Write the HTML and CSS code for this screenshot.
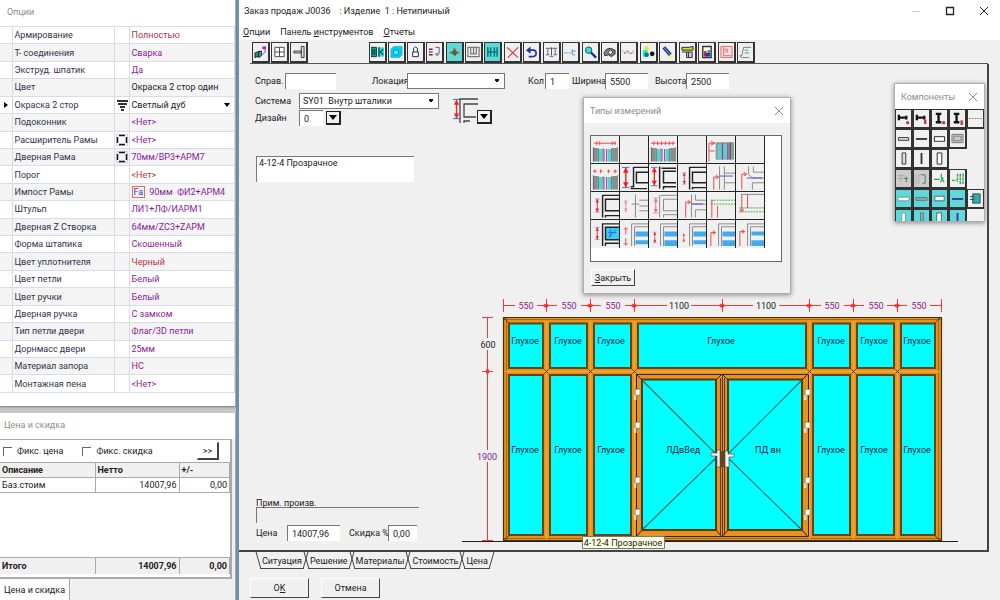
FILE: index.html
```html
<!DOCTYPE html>
<html lang="ru">
<head>
<meta charset="utf-8">
<title>Заказ продаж J0036</title>
<link rel="stylesheet" href="styles.css">
</head>
<body>
<svg class="defs" aria-hidden="true">
  <symbol id="frame" viewBox="0 0 12 12"><path d="M.5.500h11v11H.5z" fill="none" stroke="#ccccff"/><path d="M3 1.500h6M3 10.500h6M1.500 3v6M10.500 3v6" stroke="#111" stroke-width="1.500" fill="none"/></symbol>
  <symbol id="close" viewBox="0 0 10 10"><path d="M1 1l8 8M9 1L1 9" stroke="#8c8c8c" fill="none"/></symbol>
  <symbol id="bars" viewBox="0 0 29 27"><path d="M2 12h5v14H2zM22 12h5v14h-5z" fill="#8c8c8c"/><path d="M7 13h5v13H7zM17 13h5v13h-5z" fill="#5ad0d0"/><path d="M13.500 13v13M16 13v13" stroke="#a3a"/><path d="M2.500 11v15M7.500 12v14M12.500 12v14M21.500 12v14M27.500 11v15" stroke="#555" stroke-width=".7"/></symbol>
  <symbol id="dimv" viewBox="0 0 8 24"><path d="M4 2v20" stroke="#e22" stroke-width="1.500"/><path d="M1 7l3-6 3 6zM1 17l3 6 3-6z" fill="#e22"/><path d="M0 1h8M0 23h8" stroke="#44c"/></symbol>
  <symbol id="hinge" viewBox="0 0 5 10"><path d="M1 1h4v5H1z" fill="#fff" stroke="#666" stroke-width=".5"/><path d="M1 6v4" stroke="#ddd" stroke-width="2"/></symbol>
</svg>
<div class="desktop">
  <aside class="side">
    <section class="panel options">
      <h2 class="panel-title">Опции</h2>
      <table class="opts">
        <colgroup><col class="c-mark"><col class="c-name"><col class="c-ico"><col></colgroup>
        <tr><td></td><th>Армирование</th><td></td><td class="red">Полностью</td></tr>
        <tr><td></td><th>Т- соединения</th><td></td><td>Сварка</td></tr>
        <tr><td></td><th>Экструд. шпатик</th><td></td><td>Да</td></tr>
        <tr><td></td><th>Цвет</th><td></td><td class="blk">Окраска 2 стор один</td></tr>
        <tr class="current"><td class="mark"><svg width="4" height="6"><path d="M0 0l4 3-4 3z"/></svg></td><th>Окраска 2 стор</th><td class="ico"><svg width="12" height="12"><path d="M1 2h11M2 5h9M4 8h5M5 11h3" stroke="#333" stroke-width="1.800"/></svg></td><td class="blk"><span class="pick">Светлый дуб<svg width="6" height="4"><path d="M0 0h6l-3 4z"/></svg></span></td></tr>
        <tr><td></td><th>Подоконник</th><td></td><td>&lt;Нет&gt;</td></tr>
        <tr><td></td><th>Расширитель Рамы</th><td class="ico"><svg width="12" height="12"><use href="#frame"/></svg></td><td>&lt;Нет&gt;</td></tr>
        <tr><td></td><th>Дверная Рама</th><td class="ico"><svg width="12" height="12"><use href="#frame"/></svg></td><td>70мм/ВР3+АРМ7</td></tr>
        <tr><td></td><th>Порог</th><td></td><td class="red">&lt;Нет&gt;</td></tr>
        <tr><td></td><th>Импост Рамы</th><td></td><td><span class="fa">Fa</span>90мм&nbsp; ФИ2+АРМ4</td></tr>
        <tr><td></td><th>Штульп</th><td></td><td>ЛИ1+ЛФ/ИАРМ1</td></tr>
        <tr><td></td><th>Дверная Z Створка</th><td></td><td>64мм/ZС3+ZАРМ</td></tr>
        <tr><td></td><th>Форма штапика</th><td></td><td>Скошенный</td></tr>
        <tr><td></td><th>Цвет уплотнителя</th><td></td><td class="red">Черный</td></tr>
        <tr><td></td><th>Цвет петли</th><td></td><td>Белый</td></tr>
        <tr><td></td><th>Цвет ручки</th><td></td><td>Белый</td></tr>
        <tr><td></td><th>Дверная ручка</th><td></td><td>С замком</td></tr>
        <tr><td></td><th>Тип петли двери</th><td></td><td>Флаг/3D петли</td></tr>
        <tr><td></td><th>Дорнмасс двери</th><td></td><td>25мм</td></tr>
        <tr><td></td><th>Материал запора</th><td></td><td>НС</td></tr>
        <tr><td></td><th>Монтажная пена</th><td></td><td>&lt;Нет&gt;</td></tr>
      </table>
    </section>
    <section class="panel price">
      <h2 class="panel-title">Цена и скидка</h2>
      <div class="price-body">
        <div class="checks">
          <label><input type="checkbox">Фикс. цена</label>
          <label><input type="checkbox">Фикс. скидка</label>
          <button class="btn more">&gt;&gt;</button>
        </div>
        <table class="sums">
          <colgroup><col class="c-desc"><col class="c-net"><col></colgroup>
          <thead><tr><th>Описание</th><th>Нетто</th><th>+/-</th></tr></thead>
          <tbody><tr><td>Баз.стоим</td><td class="num">14007,96</td><td class="num">0,00</td></tr></tbody>
        </table>
        <table class="sums total">
          <colgroup><col class="c-desc"><col class="c-net"><col></colgroup>
          <tbody><tr><td>Итого</td><td class="num">14007,96</td><td class="num">0,00</td></tr></tbody>
        </table>
      </div>
      <button class="side-tab">Цена и скидка</button>
    </section>
  </aside>

  <main class="window">
    <header class="titlebar">
      <h1>Заказ продаж J0036 &nbsp;&nbsp; : Изделие&nbsp; 1 : Нетипичный</h1>
      <div class="winctl">
        <button aria-label="Свернуть"><svg width="10" height="10"><path d="M1 5.500h8" stroke="#ccc"/></svg></button>
        <button aria-label="Развернуть"><svg width="10" height="10"><path d="M1.500 1.500h7v7h-7z" fill="none" stroke="#222" stroke-width="1.300"/></svg></button>
        <button aria-label="Закрыть окно"><svg width="10" height="10"><path d="M1 1l8 8M9 1L1 9" stroke="#222"/></svg></button>
      </div>
    </header>
    <nav class="menu"><a href="#"><u>О</u>пции</a><a href="#">Панель <u>и</u>нструментов</a><a href="#"><u>О</u>тчеты</a></nav>

    <div class="toolbar">
      <div class="tg first">
        <button aria-label="Профили"><svg viewBox="0 0 14 16"><path d="M1 9l5-2v5l-5 2z" fill="#2a8a7a" stroke="#222"/><path d="M5 8l3-1v5l-3 2z" fill="#3aa" stroke="#222"/><path d="M9 2h4v3H9z" fill="#a2b"/><path d="M12 5v3l-3 3" stroke="#a2b" fill="none"/></svg></button>
        <button aria-label="Окно"><svg viewBox="0 0 14 16"><path d="M2 3h10v10H2zM7 3v10M2 8h10" fill="#fff" stroke="#444"/></svg></button>
        <button aria-label="Импост"><svg viewBox="0 0 14 16"><path d="M10 2h3v12h-3zM2 7h8v2H2z" fill="#ddd" stroke="#333"/></svg></button>
      </div>
      <div class="tg">
        <button aria-label="Створка"><svg viewBox="0 0 14 16"><path d="M0 3h6v10H0z" fill="#1a9a9a" stroke="#033"/><path d="M2 5v6M4 5v6" stroke="#033"/><path d="M8 3h6v10H8z" fill="#2dd"/><path d="M13 5l-3 3 3 3M8.500 3v10" stroke="#055" fill="none" stroke-width="1.500"/></svg></button>
        <button aria-label="Стекло"><svg viewBox="0 0 14 16"><path d="M1 5l3-3h9v9l-3 3H1z" fill="#0ce" stroke="#3bc"/><path d="M4 6h5v5H4z" fill="#5ef" stroke="#09b"/></svg></button>
        <button aria-label="Замок"><svg viewBox="0 0 14 16"><path d="M5 8V4q2-3 4 0v4M4 8h6v5H4z" fill="#fff" stroke="#222"/></svg></button>
        <button aria-label="Список"><svg viewBox="0 0 14 16"><path d="M1 5h4" stroke="#22a" stroke-width="1.500"/><path d="M1 8h4" stroke="#c22" stroke-width="1.500"/><path d="M1 11h4" stroke="#333" stroke-width="1.500"/><path d="M8 3h4v6l-2 3-2-2h3" fill="none" stroke="#648"/></svg></button>
      </div>
      <div class="tg">
        <button class="aq" aria-label="Разрез"><svg viewBox="0 0 14 16"><path d="M1 9l4-2 2-4 2 4 4 2-4 1-1 3-3-3z" fill="#b54a2a"/><path d="M5 7h4v4H5z" fill="#2a7a3a"/></svg></button>
        <button aria-label="Рама"><svg viewBox="0 0 14 16"><path d="M1 3h12v10H1zM4 3v7h6V3M7 3v7" fill="none" stroke="#777" stroke-width="1.300"/></svg></button>
        <button class="aq" aria-label="Соединение"><svg viewBox="0 0 14 16"><path d="M2 3v10M5 3v10M9 3v10M12 3v10M2 8h10" stroke="#08757c" stroke-width="1.600"/></svg></button>
      </div>
      <div class="tg">
        <button aria-label="Удалить"><svg viewBox="0 0 14 16"><path d="M1 3l12 11M13 3L2 14" stroke="#d33" fill="none" stroke-width="1.200"/></svg></button>
        <button aria-label="Отменить"><svg viewBox="0 0 14 16"><path d="M4 6h5q3 0 3 3.500T7 13H4" stroke="#23a" fill="none" stroke-width="1.800"/><path d="M1 6l5-4v8z" fill="#23a"/></svg></button>
      </div>
      <div class="tg">
        <button aria-label="Весы"><svg viewBox="0 0 14 16"><path d="M1 4h12M3 4v7M11 4v7M7 4v8M1 11h4M9 11h4M5 13h4" stroke="#666" fill="none"/><path d="M7 3v8" stroke="#44a"/></svg></button>
        <button aria-label="Линия"><svg viewBox="0 0 14 16"><path d="M0 9h4M5 9h3" stroke="#79b"/><path d="M9 5v6h3M8 7h5" stroke="#69c" fill="none"/></svg></button>
      </div>
      <div class="tg">
        <button aria-label="Масштаб"><svg viewBox="0 0 14 16"><path d="M7 8l6 6" stroke="#22a" stroke-width="2.500"/><circle cx="5" cy="6" r="3.500" fill="#3dd" stroke="#154"/></svg></button>
        <button aria-label="Блок"><svg viewBox="0 0 14 16"><path d="M1 9l3-4 4-1 5 2v4l-4 3-3-2-4 1z" fill="#888" stroke="#222"/><path d="M5 8l3-2 3 2-3 3z" fill="#fff" stroke="#333"/></svg></button>
        <button aria-label="Волна"><svg viewBox="0 0 14 16"><path d="M0 6l3 3 3-3 3 4 4-4M2 10l4-2 3 2 4-2" stroke="#a6a" fill="none" stroke-dasharray="2 1"/></svg></button>
      </div>
      <div class="tg">
        <button aria-label="Цвета"><svg viewBox="0 0 14 16"><circle cx="5" cy="4" r="2.500" fill="#fd2"/><path d="M1 6h5v7H1z" fill="#0ee"/><circle cx="5" cy="11" r="2.500" fill="#176"/><circle cx="11" cy="10" r="2.500" fill="#111"/></svg></button>
        <button aria-label="Кисть"><svg viewBox="0 0 14 16"><path d="M9 8l5 6h-6z" fill="#fe6"/><path d="M3 3l7 8" stroke="#238" stroke-width="4"/><path d="M3 3l7 8" stroke="#9be"/></svg></button>
      </div>
      <div class="tg">
        <button aria-label="Папка"><svg viewBox="0 0 14 16"><path d="M1 3h8l4-1v4H1z" fill="#dd2" stroke="#222"/><path d="M6 8h6v6H6z" fill="#ccd" stroke="#222"/><path d="M8 8v6M1 8h5" stroke="#222"/></svg></button>
        <button aria-label="Отчет"><svg viewBox="0 0 14 16"><path d="M3 2h9v12H3z" fill="#fff" stroke="#333" stroke-width="1.500"/><path d="M4 7h3v6H4z" fill="#d22"/><path d="M6 9h5v4H6z" fill="#23c"/><path d="M8 6h3v3H8z" fill="#2a3"/></svg></button>
      </div>
      <div class="tg">
        <button aria-label="Чертеж"><svg viewBox="0 0 14 16"><path d="M1 2h12v12H1zM4 3v9h8M4 5h4v3H5" fill="#fdd" stroke="#d66"/></svg></button>
        <button aria-label="Документ"><svg viewBox="0 0 14 16"><path d="M13 3H5L3 12h-2q0 2 3 2h7" fill="none" stroke="#777"/><path d="M6 6h4M6 9h5" stroke="#3a5"/></svg></button>
      </div>
    </div>

    <div class="work">
      <form class="form">
        <div class="row">
          <label class="lab" for="ref">Справ.</label><input id="ref" class="w-ref">
          <label class="loc" for="loc">Локация</label><select id="loc" class="w-loc"><option></option></select>
          <label class="qty" for="qty">Кол</label><input id="qty" class="w-qty" value="1">
          <label class="wid" for="wd">Ширина</label><input id="wd" class="w-dim" value="5500">
          <label class="hgt" for="ht">Высота</label><input id="ht" class="w-dim" value="2500">
        </div>
        <div class="split">
          <div>
            <div class="row sys"><label class="lab2" for="sys">Система</label><select id="sys" class="w-sys"><option>SY01&nbsp; Внутр шталики</option></select></div>
            <div class="row dsn"><label class="lab2" for="dsn">Дизайн</label><input id="dsn" class="w-qty" value="0"><button type="button" class="drop" aria-label="Выбрать дизайн"><svg width="8" height="5"><path d="M0 0h8l-4 5z"/></svg></button></div>
          </div>
          <div class="profile"><svg width="26" height="26"><use href="#dimv" x="0" y="0" width="7" height="22"/><path d="M25 1H7v24M25 6H11v13h12M11 25v-2h6" fill="none" stroke="#444" stroke-width="1.300"/></svg><button type="button" class="drop" aria-label="Выбрать профиль"><svg width="8" height="5"><path d="M0 0h8l-4 5z"/></svg></button></div>
        </div>
        <textarea class="glass" aria-label="Заполнение">4-12-4 Прозрачное</textarea>
      </form>
      <div class="lower">
        <form class="notes">
          <label for="note">Прим. произв.</label><input id="note" class="note">
          <div class="row"><label class="lab3" for="cost">Цена</label><input id="cost" class="w-cost" value="14007,96"><label class="disc" for="disc">Скидка %</label><input id="disc" class="w-disc" value="0,00"></div>
        </form>
        <svg class="drawing" viewBox="460 295 525 255" preserveAspectRatio="xMinYMax meet" role="img" aria-label="Чертеж изделия">
          <path d="M462 541.500h496" stroke="#222"/>
          <g stroke="#f33" fill="#e33">
            <path d="M503 305.500h12M537 305.500h20M581 305.500h20M625 305.500h42M691 305.500h62M779 305.500h42M844 305.500h20M887 305.500h20M930 305.500h11" fill="none"/>
            <path d="M503.500 299v13M546.500 299v13M590.500 299v13M634.500 299v13M722.500 299v13M809.500 299v13M853.500 299v13M897.500 299v13M941.500 299v13" fill="none"/>
            <path d="M543 305.500l3-1.500 3 1.500-3 2zM587 305.500l3-1.500 3 1.500-3 2zM631 305.500l3-1.500 3 1.500-3 2zM719 305.500l3-1.500 3 1.500-3 2zM806 305.500l3-1.500 3 1.500-3 2zM850 305.500l3-1.500 3 1.500-3 2zM894 305.500l3-1.500 3 1.500-3 2z"/>
            <path d="M487.500 318v20M487.500 350v100M487.500 462v79M482 317.500h11M482 371.500h11M482 540.500h11M486 371.500l1.500-3 1.500 3-1.500 3z"/>
          </g>
          <g class="dim">
            <text class="v" x="526" y="309">550</text><text class="v" x="569" y="309">550</text><text class="v" x="613" y="309">550</text>
            <text x="679" y="309">1100</text><text x="766" y="309">1100</text>
            <text class="v" x="832" y="309">550</text><text class="v" x="876" y="309">550</text><text class="v" x="919" y="309">550</text>
            <text x="488" y="348">600</text><text class="v" x="487" y="460">1900</text>
          </g>
          <path d="M503.500 317.500h438v223h-438z" fill="#e2941f" stroke="#4a2c06" stroke-width="1.200"/>
          <path d="M504 319.500h437M506.500 318v222M938.500 318v222M504 538.500h437" stroke="#8a5510" stroke-width=".7"/>
          <path d="M503 317l7 7M941 317l-7 7M503 541l7-6M941 541l-7-6" stroke="#3a2204" stroke-width=".8"/>
          <g fill="#0ff" stroke="#6b4210" stroke-width="2">
            <path d="M509 323.500h34v44.500h-34zM550 323.500h37v44.500h-37zM594 323.500h37v44.500h-37zM638 323.500h168v44.500H638zM813 323.500h37v44.500h-37zM857 323.500h37v44.500h-37zM901 323.500h34v44.500h-34z"/>
            <path d="M509 375h34v160h-34zM550 375h37v160h-37zM594 375h37v160h-37zM813 375h37v160h-37zM857 375h37v160h-37zM901 375h34v160h-34z"/>
          </g>
          <path d="M546.500 321v218M590.500 321v218M634.500 321v218M809.500 321v218M853.500 321v218M897.500 321v218M505 371.500h434" stroke="#f1a838" stroke-width="1.500"/>
          <g stroke="#3a2204" stroke-width=".8"><path d="M544.500 369.500l4 4m0-4l-4 4M588.500 369.500l4 4m0-4l-4 4M632.500 369.500l4 4m0-4l-4 4M807.500 369.500l4 4m0-4l-4 4M851.500 369.500l4 4m0-4l-4 4M895.500 369.500l4 4m0-4l-4 4"/></g>
          <path d="M636.500 374.500h172v162h-172z" fill="#e2941f" stroke="#3a2204"/>
          <path d="M722.500 374v163M720.500 378v157M724.500 378v157" stroke="#3a2204" stroke-width=".8"/>
          <g fill="#0ff" stroke="#5c380c" stroke-width="2"><path d="M642 379.500h74v150.500h-74zM728 379.500h74v150.500h-74z"/></g>
          <path d="M636 374l6 6M808 374l-6 6M636 537l6-7M808 537l-6-7M722 374l-6 6M722 374l6 6M722 537l-6-7M722 537l6-7" stroke="#3a2204"/>
          <path d="M642 380l76 76-76 74M802 380l-76 76 76 74" fill="none" stroke="#156a6a" stroke-width="1.200"/>
          <g><use href="#hinge" x="634" y="388" width="6" height="12"/><use href="#hinge" x="634" y="421" width="6" height="12"/><use href="#hinge" x="634" y="476" width="6" height="12"/><use href="#hinge" x="634" y="508" width="6" height="12"/><use href="#hinge" x="804" y="388" width="6" height="12"/><use href="#hinge" x="804" y="421" width="6" height="12"/><use href="#hinge" x="804" y="476" width="6" height="12"/><use href="#hinge" x="804" y="508" width="6" height="12"/></g>
          <path d="M711 453h6v-3h3v17h-3v-11h-6zM734 454h-6v-3h-3v16h4v-10h5z" fill="#f4f4f4" stroke="#555" stroke-width=".7"/><path d="M720.500 451h4v16h-4z" fill="#6b4210"/>
          <g class="pane">
            <text x="525" y="344">Глухое</text><text x="568" y="344">Глухое</text><text x="611" y="344">Глухое</text><text x="721" y="344">Глухое</text><text x="831" y="344">Глухое</text><text x="874" y="344">Глухое</text><text x="917" y="344">Глухое</text>
            <text x="525" y="453">Глухое</text><text x="568" y="453">Глухое</text><text x="611" y="453">Глухое</text><text x="683" y="453">ЛДвВед</text><text x="768" y="453">ПД вн</text><text x="831" y="453">Глухое</text><text x="874" y="453">Глухое</text><text x="917" y="453">Глухое</text>
          </g>
          <path d="M582.500 536.500h82v12h-82z" fill="#ffffe1" stroke="#777"/>
          <text class="tip" x="623" y="546">4-12-4 Прозрачное</text>
        </svg>
      </div>
    </div>
    <div class="tabs"><button>Ситуация</button><button class="on">Решение</button><button>Материалы</button><button>Стоимость</button><button>Цена</button></div>
    <div class="actions"><button class="btn">O<u>K</u></button><button class="btn">Отмена</button></div>

    <section class="dialog types">
      <header><h2>Типы измерений</h2><button aria-label="Закрыть типы"><svg width="10" height="10"><use href="#close"/></svg></button></header>
      <div class="well"><div class="tgrid">
        <button aria-label="Тип 1"><svg viewBox="0 0 29 27"><use href="#bars" width="29" height="27"/><path class="r" d="M3 7h23M6 5v4M9 5v4M22 5v4M25 5v4"/></svg></button>
        <button aria-label="Тип 2"></button>
        <button aria-label="Тип 3"><svg viewBox="0 0 29 27"><use href="#bars" width="29" height="27"/><path class="r" d="M2 7h25M5 5v4M9 5v4M13 5v4M17 5v4M21 5v4M25 5v4"/></svg></button>
        <button aria-label="Тип 4"></button>
        <button aria-label="Тип 5"><svg viewBox="0 0 29 27"><path d="M9 6h19v18H9z" fill="#8c9a9a"/><path d="M11 8h4v15h-4zM17 8h4v15h-4z" fill="#5ad0d0"/><path d="M16 7v17M21.500 7v17" stroke="#a3a"/><path d="M24 6v18" stroke="#444"/><path class="r" d="M2 26V7h6M4 5l4 2-4 2M2 15h6"/></svg></button>
        <button aria-label="Тип 6"></button>

        <button aria-label="Тип 7"><svg viewBox="0 0 29 27"><use href="#bars" width="29" height="27"/><path class="r" d="M2 7h4M9 7h3M17 7h3M23 7h4M4 5v4M10 5v4M18 5v4M25 5v4"/></svg></button>
        <button aria-label="Тип 8"><svg viewBox="0 0 29 27"><use href="#dimv" x="2" y="2" width="8" height="23"/><path class="k" d="M29 3H14v20H11M29 8H17v11h12M11 25h17"/></svg></button>
        <button class="sel" aria-label="Тип 9"><svg viewBox="0 0 29 27"><use href="#dimv" x="2" y="2" width="7" height="21"/><path class="k" d="M11 2v23M28 4H13M28 7H15v12h13M15 26v-3h13"/></svg></button>
        <button aria-label="Тип 10"><svg viewBox="0 0 29 27"><use href="#dimv" x="3" y="8" width="7" height="13"/><path class="k" d="M29 3H12v23M29 8H15v11h14M15 26v-2h14"/></svg></button>
        <button aria-label="Тип 11"><svg viewBox="0 0 29 27"><path class="g" d="M13 2v24M18 2v7h11M18 26v-7h11M18 9v10"/><path class="r" d="M7 26V13h5M9 11l3 2-3 2"/><path class="b" d="M13 12h14"/></svg></button>
        <button aria-label="Тип 12"><svg viewBox="0 0 29 27"><path class="g" d="M13 2v8l4 4h12M18 2v6h11M17 26v-7h12"/><path class="r" d="M6 26V10h5M8 8l3 2-3 2"/><path class="b" d="M11 14h16"/></svg></button>

        <button aria-label="Тип 13"><svg viewBox="0 0 29 27"><use href="#dimv" x="3" y="6" width="7" height="15"/><path class="k" d="M29 3H12v23M29 7H15v12h14M15 26v-2h14"/></svg></button>
        <button aria-label="Тип 14"><svg viewBox="0 0 29 27"><use href="#dimv" x="3" y="8" width="6" height="12" opacity=".6"/><path class="g" d="M16 2v24M20 8h9M20 14h9M20 19h9M12 12h8"/></svg></button>
        <button aria-label="Тип 15"><svg viewBox="0 0 29 27"><use href="#dimv" x="4" y="5" width="6" height="17" opacity=".6"/><path class="g" d="M11 3v23M29 3H12M29 7H15v12h14M15 26v-3h14"/></svg></button>
        <button aria-label="Тип 16"><svg viewBox="0 0 29 27"><path class="g" d="M14 2v10h15M18 2v6h11M18 26v-8h11M14 26V12"/><path class="r" d="M8 26V10h5M10 8l3 2-3 2"/><path class="b" d="M14 12h12"/></svg></button>
        <button aria-label="Тип 17"><svg viewBox="0 0 29 27"><path class="gr" d="M4 8h25M4 12h25"/><path class="r" d="M5 26V10M11 26V14M4 10l3-2"/></svg></button>
        <button aria-label="Тип 18"><svg viewBox="0 0 29 27"><path class="gr" d="M3 16h26M3 20h26"/><path class="r" d="M6 2v18M12 2v14M4 17l2 3 2-3"/><path class="g" d="M5 2h24"/></svg></button>

        <button aria-label="Тип 19"><svg viewBox="0 0 29 27"><use href="#dimv" x="3" y="6" width="7" height="14"/><path d="M15 7h14v12H15z" fill="#3cf"/><path class="b" d="M18 17l8-8M20 9v8M18 12h8"/><path class="k" d="M29 3H12v23M29 6.500H15v13h14M15 26v-3h14"/></svg></button>
        <button aria-label="Тип 20"><svg viewBox="0 0 29 27"><path d="M16 11h13v5H16zM16 20h13v4H16z" fill="#4ae"/><path class="g" d="M29 3H12v23M15 6h14M15 6v20"/><path class="r" d="M6 7v7M6 18v7M4 9l2-2 2 2M4 23l2 2 2-2"/></svg></button>
        <button aria-label="Тип 21"><svg viewBox="0 0 29 27"><use href="#dimv" x="3" y="11" width="6" height="12"/><path d="M16 11h13v5H16zM16 20h13v6H16z" fill="#4ae"/><path class="g" d="M29 3H12v23M29 6H15v20"/></svg></button>
        <button aria-label="Тип 22"><svg viewBox="0 0 29 27"><use href="#dimv" x="3" y="13" width="6" height="9"/><path d="M16 11h13v5H16zM16 20h13v4H16z" fill="#4ae"/><path class="g" d="M29 3H12v23M29 6H15v20"/></svg></button>
        <button aria-label="Тип 23"><svg viewBox="0 0 29 27"><path d="M16 11h13v5H16zM16 20h13v6H16z" fill="#4ae"/><path class="g" d="M29 3H12v23M29 6H15v20"/><path class="r" d="M4 26V12h5M6 10l3 2-3 2"/></svg></button>
        <button aria-label="Тип 24"><svg viewBox="0 0 29 27"><path d="M16 11h13v4H16zM16 20h13v6H16z" fill="#4ae"/><path class="g" d="M29 3H12v23M29 6H15v20"/><path class="r" d="M4 26V11h5M6 9l3 2-3 2"/></svg></button>
      </div></div>
      <button class="btn shut"><u>З</u>акрыть</button>
    </section>

    <section class="dialog parts">
      <header><h2>Компоненты</h2><button aria-label="Закрыть компоненты"><svg width="10" height="10"><use href="#close"/></svg></button></header>
      <div class="pgrid">
        <button aria-label="Деталь 1"><svg viewBox="0 0 14 16"><path d="M2 4v6M2 7h8M10 5v4" stroke="#111" stroke-width="2.500"/><circle cx="11.500" cy="12.500" r="1.800" fill="#c33"/></svg></button>
        <button aria-label="Деталь 2"><svg viewBox="0 0 14 16"><path d="M2 4v6M2 7h8M10 5v4" stroke="#111" stroke-width="2.500"/><path d="M11 9v5" stroke="#c33" stroke-width="2.500"/></svg></button>
        <button aria-label="Деталь 3"><svg viewBox="0 0 14 16"><path d="M3 3h6M6 3v9M3 12h6" stroke="#111" stroke-width="2.500"/><circle cx="11.500" cy="12.500" r="1.800" fill="#c33"/></svg></button>
        <button aria-label="Деталь 4"><svg viewBox="0 0 14 16"><path d="M3 3h6M6 3v9M3 12h6" stroke="#111" stroke-width="2.500"/><path d="M11.500 10v5" stroke="#c33" stroke-width="2.500"/></svg></button>
        <button aria-label="Деталь 5"><svg viewBox="0 0 14 16"><path d="M0 8h14" stroke="#c66" stroke-dasharray="2 1"/></svg></button>
        <button aria-label="Деталь 6"><svg viewBox="0 0 14 16"><path d="M1.500 7h11v3h-11z" fill="#ddd" stroke="#333"/></svg></button>
        <button aria-label="Деталь 7"><svg viewBox="0 0 14 16"><path d="M1 8.500h12" stroke="#333" stroke-width="2"/></svg></button>
        <button aria-label="Деталь 8"><svg viewBox="0 0 14 16"><path d="M1.500 6h11v5h-11z" fill="#fff" stroke="#222"/></svg></button>
        <button aria-label="Деталь 9"><svg viewBox="0 0 14 16"><path d="M1 3.500h12v9H1zM3 5.500h8v5H3z" fill="#ccc" stroke="#777"/></svg></button>
        <i></i>
        <button aria-label="Деталь 10"><svg viewBox="0 0 14 16"><path d="M5.500 2h4v12h-4z" fill="#ddd" stroke="#333"/></svg></button>
        <button aria-label="Деталь 11"><svg viewBox="0 0 14 16"><path d="M7 2v12" stroke="#333" stroke-width="2"/></svg></button>
        <button aria-label="Деталь 12"><svg viewBox="0 0 14 16"><path d="M4.500 2h5v12h-5z" fill="#fff" stroke="#222"/></svg></button>
        <i></i><i></i>
        <button class="gy" aria-label="Деталь 13"><svg viewBox="0 0 14 16"><path d="M1 5h8M1 8h7M4 4v8" stroke="#888" stroke-dasharray="1 1"/><path d="M10 6v6M8 8h4" stroke="#384"/></svg></button>
        <button class="gy" aria-label="Деталь 14"><svg viewBox="0 0 14 16"><path d="M1 4v10M4 4v10" stroke="#888" stroke-dasharray="1 1"/><path d="M6 4h5v9H8" stroke="#384" fill="none"/></svg></button>
        <button aria-label="Деталь 15"><svg viewBox="0 0 14 16"><path d="M1 9h6M9 3v4l3 5M11 7l-3 5" stroke="#2a4" fill="none" stroke-width="1.300"/></svg></button>
        <button aria-label="Деталь 16"><svg viewBox="0 0 14 16"><path d="M1 10h5M7 3v9M10 3v11M13 3v11" stroke="#2a4" stroke-width="1.500" stroke-dasharray="3 1"/></svg></button>
        <i></i>
        <button class="aq" aria-label="Деталь 17"><svg viewBox="0 0 14 16"><path d="M1 6.500h12v4H1z" fill="#fff" stroke="#699"/></svg></button>
        <button class="aq" aria-label="Деталь 18"><svg viewBox="0 0 14 16"><path d="M1 7h12v3H1z" fill="#9aa" stroke="#577"/></svg></button>
        <button class="aq" aria-label="Деталь 19"><svg viewBox="0 0 14 16"><path d="M2 5.500h10v5H2z" fill="#fff" stroke="#466"/></svg></button>
        <button class="aq" aria-label="Деталь 20"><svg viewBox="0 0 14 16"><path d="M1 8.500h12" stroke="#438" stroke-width="2"/></svg></button>
        <button aria-label="Деталь 21"><svg viewBox="0 0 14 16"><path d="M4 3h8v10H4z" fill="#3aa" stroke="#255"/><path d="M1 6h5M1 9h5" stroke="#444"/></svg></button>
        <button class="aq" aria-label="Деталь 22"><svg viewBox="0 0 14 16"><path d="M5 2h4v12H5z" fill="#fff" stroke="#699"/></svg></button>
        <button class="aq" aria-label="Деталь 23"><svg viewBox="0 0 14 16"><path d="M6 2h3v12H6z" fill="#9aa" stroke="#577"/></svg></button>
        <button class="aq" aria-label="Деталь 24"><svg viewBox="0 0 14 16"><path d="M4 2h5v12H4z" fill="#fff" stroke="#466"/></svg></button>
        <button class="aq" aria-label="Деталь 25"><svg viewBox="0 0 14 16"><path d="M7 2v12" stroke="#438" stroke-width="2"/></svg></button>
      </div>
    </section>
  </main>
</div>
</body>
</html>
```
FILE: styles.css
```css
* { box-sizing: border-box; }
body, h1, h2 { margin: 0; }
body, button, input, select, textarea {
  font: 9px/12px "Roboto", sans-serif;
  color: #222;
}
button { padding: 0; border: 0; background: none; border-radius: 0; }
form { margin: 0; }
label { white-space: nowrap; }
svg { flex: none; display: block; }
.defs { position: absolute; width: 0; height: 0; }
.desktop { display: flex; min-height: 100vh; background: #f0f0f0; }

/* left column */
.side {
  flex: none; width: 239px; display: flex; flex-direction: column; gap: 7px;
  background: #c6c6c6; border-right: 3px solid #6b94b4;
}
.panel { background: #fff; border-right: 1px solid #aaa; }
.panel-title {
  height: 26px; padding: 0 7px; font-size: 9px; font-weight: normal; line-height: 25px; color: #8c8c8c;
}
.options { padding-bottom: 13px; box-shadow: 0 1px 2px #777; }
.opts { width: 100%; height: 367px; table-layout: fixed; border-collapse: collapse; border-top: 1px solid #999; }
.c-mark { width: 12px; }
.c-name { width: 102px; }
.c-ico { width: 15px; }
.opts td, .opts th {
  padding: 0 2px; text-align: left; font-weight: normal; white-space: nowrap;
  border: 1px solid #d9dce4; border-left: 0; color: #8a1a9a; vertical-align: middle;
}
.opts th { color: #333348; }
.opts tr:nth-child(even) > * { background: #f4f4f5; }
.opts .red { color: #b8333f; }
.opts .blk { color: #222; }
.opts .ico { padding: 0 1px; }
.opts .mark { padding: 0 4px; }
.pick { display: flex; justify-content: space-between; align-items: center; padding-right: 2px; }
.fa { display: inline-block; margin-right: 4px; padding: 0 1px; border: 1px solid #e66; color: #33c; line-height: 10px; }

.price { flex: 1; display: flex; flex-direction: column; background: #f0f0f0; }
.price .panel-title { padding: 0 4px; background: #fff; }
.price-body {
  flex: 1; display: flex; flex-direction: column; margin-right: 3px; background: #fff;
  border: 1px solid #aaa; border-width: 1px 2px 2px 0;
}
.checks { display: flex; align-items: center; gap: 19px; height: 22px; padding: 0 11px 0 3px; }
.checks label { display: flex; align-items: center; gap: 5px; }
.checks input {
  appearance: none; width: 9px; height: 9px; margin: 0; background: #fff;
  border: 1px solid #666; border-width: 1px 0 0 1px;
}
.btn {
  background: #f0f0f0; border: 1px solid #fff; border-right-color: #444; border-bottom-color: #444;
  text-align: center;
}
.more { width: 22px; height: 18px; margin-left: auto; background: #fff; border-right-width: 2px; border-bottom-width: 2px; }
.sums { width: 100%; table-layout: fixed; border-collapse: collapse; }
.c-desc { width: 95px; }
.c-net { width: 84px; }
.sums th, .sums td { height: 15px; padding: 0 2px; text-align: left; border: 1px solid #aaa; border-left: 0; }
.sums th { background: #f0f0f0; font-weight: bold; }
.sums .num { text-align: right; }
.total { margin-top: auto; margin-bottom: 3px; font-weight: bold; }
.total td { background: #f0f0f0; height: 17px; border-bottom: 0; }
.side-tab { align-self: flex-start; width: 70px; height: 21px; background: #fff; border-right: 1px solid #aaa; }

/* order window */
.window { position: relative; flex: 1; min-width: 0; display: flex; flex-direction: column; }
.titlebar { display: flex; justify-content: space-between; height: 22px; padding: 0 11px 0 5px; background: #fff; }
.titlebar h1 { font-size: 9px; font-weight: normal; line-height: 22px; color: #222; }
.winctl { display: flex; align-items: center; gap: 24px; }
.menu { display: flex; gap: 10px; height: 18px; padding: 0 4px; background: #fff; line-height: 20px; }
.menu a { color: #222; text-decoration: none; }
.toolbar { display: flex; gap: 2px; margin: 2px 12px 0 11px; border-bottom: 1px solid #555; }
.tg { display: flex; gap: 1px; }
.tg.first { margin: 0 59px 0 2px; }
.tg button, .pgrid button {
  width: 18px; height: 21px; padding: 1px; background: #f0f0f0;
  border: 1px solid #333; border-right-width: 2px; border-bottom-width: 2px;
}
.tg svg, .pgrid svg, .tgrid svg { width: 100%; height: 100%; }
.tg .aq, .pgrid .aq { background: #5fd8dc; }
.work {
  flex: 1; display: flex; flex-direction: column; margin-right: 11px;
  border: solid #444; border-width: 0 2px 2px 0;
}
.work input, .work textarea {
  height: 16px; margin: 0; padding: 0 4px; background: #fff; border-radius: 0;
  border: 1px solid #777; border-width: 1px 0 0 1px; outline: 0; resize: none;
}
select {
  appearance: none; height: 16px; padding: 0 14px 0 3px; border-radius: 0; border: 1px solid #777;
  background: #fff conic-gradient(from -34deg at 50% 100%, #111 68deg, transparent 0) no-repeat right 4px center / 6px 4px;
}
.form { padding: 9px 0 0 16px; }
.row { display: flex; align-items: center; gap: 3px; }
.lab { width: 27px; }
.lab2 { width: 41px; }
.w-ref { width: 51px; }
.loc { width: 32px; margin-left: 33px; }
.w-loc { width: 98px; }
.qty { width: 14px; margin-left: 20px; }
.w-qty { width: 24px; }
.wid { width: 30px; }
.w-dim { width: 43px; }
.hgt { width: 28px; margin-left: 4px; }
.split { display: flex; gap: 14px; margin-top: 4px; }
.w-sys { width: 140px; }
.dsn { margin-top: 1px; }
.drop {
  display: grid; place-items: center; width: 15px; height: 14px; background: #f0f0f0;
  border: 1px solid #222; border-right-width: 2px; border-bottom-width: 2px;
}
.profile { display: flex; align-items: flex-end; padding-top: 3px; height: 31px; }
.profile .drop { margin-left: -2px; }
.work .glass { display: block; width: 158px; height: 26px; margin: 30px 0 0 1px; padding: 0 2px; line-height: 13px; }
.lower { flex: 1; display: flex; align-items: flex-end; }
.notes { flex: none; width: 221px; padding: 0 41px 9px 17px; }
.notes > label { display: block; height: 10px; }
.work .note { display: block; width: 100%; margin-bottom: 2px; background: #f0f0f0; }
.lab3 { width: 28px; }
.w-cost { width: 53px; }
.disc { width: 36px; margin-left: 6px; }
.w-disc { width: 29px; }
.drawing { flex: 1; min-width: 0; height: 255px; }
.drawing text { font-size: 9px; text-anchor: middle; fill: #222; }
.drawing .v { fill: #8a1a8a; }
.drawing .pane text { fill: #024; }

.tabs { display: flex; padding-left: 19px; height: 17px; }
.tabs button { position: relative; height: 17px; padding: 0 4px; }
.tabs button::before, .tabs button::after {
  content: ""; position: absolute; top: 0; bottom: 0; border: 1px solid #444; border-top: 0;
}
.tabs button::before { left: 0; right: 50%; border-right: 0; transform: skewX(16deg); }
.tabs button::after { left: 50%; right: 0; border-left: 0; transform: skewX(-16deg); }
.actions { display: flex; gap: 12px; padding: 9px 11px 2px; }
.actions .btn { width: 59px; height: 20px; }

/* floating windows */
.dialog { position: absolute; background: #f0f0f0; border: 1px solid #b0b0b0; box-shadow: 0 1px 5px #888; }
.dialog header { display: flex; justify-content: space-between; align-items: center; height: 25px; padding: 0 6px; background: #fff; }
.dialog h2 { font-size: 9px; font-weight: normal; line-height: 24px; color: #8c8c8c; }
.types { left: 344px; top: 97px; width: 208px; padding-bottom: 7px; }
.well { margin: 12px 8px 7px 6px; height: 127px; background: #fff; border: 1px solid #666; }
.tgrid { display: grid; grid-template-columns: repeat(6, 29px); grid-auto-rows: 28px; }
.tgrid button { background: #f0f0f0; border: 1px solid #222; border-width: 0 1px 1px 0; }
.tgrid button:nth-child(n+19) { border-bottom: 0; }
.tgrid .sel { outline: 1px solid #111; }
.r, .k, .g, .b, .gr { fill: none; }
.r { stroke: #e44; }
.k { stroke: #222; stroke-width: 1.5px; }
.g { stroke: #888; }
.b { stroke: #55c; }
.gr { stroke: #4a4; stroke-dasharray: 2 1; }
.shut { width: 44px; height: 17px; margin-left: 7px; }
.parts { right: 15px; top: 83px; width: 91px; height: 139px; overflow: hidden; }
.pgrid { display: grid; grid-template-columns: repeat(5, 18px); grid-auto-rows: 20px; }
.pgrid button { height: 20px; }
.pgrid .gy { background: #ccc; }
```
